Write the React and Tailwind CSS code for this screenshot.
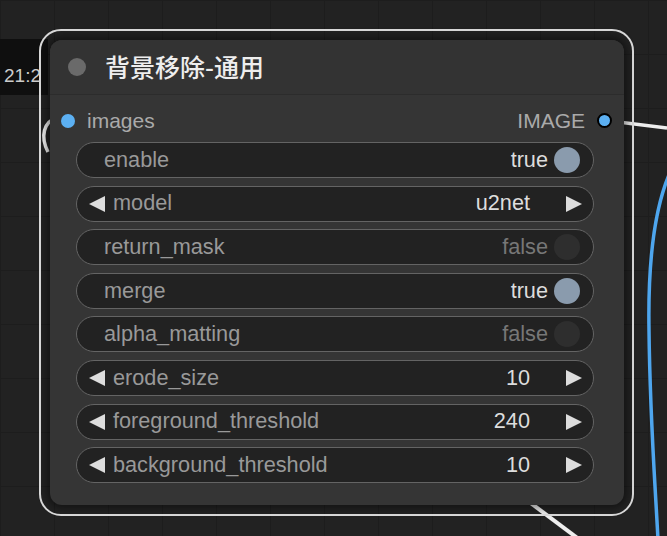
import React from "react";

const FONT = { fontFamily: '"Liberation Sans", Arial, sans-serif' };

const widgets = [
  { type: "toggle", label: "enable", value: "true", on: true },
  { type: "combo", label: "model", value: "u2net" },
  { type: "toggle", label: "return_mask", value: "false", on: false },
  { type: "toggle", label: "merge", value: "true", on: true },
  { type: "toggle", label: "alpha_matting", value: "false", on: false },
  { type: "combo", label: "erode_size", value: "10" },
  { type: "combo", label: "foreground_threshold", value: "240" },
  { type: "combo", label: "background_threshold", value: "10" },
];

const ArrowLeft = () => (
  <svg width="18" height="18" viewBox="0 0 18 18" className="shrink-0">
    <polygon points="17,1 17,17 1,9" fill="#dddddd" />
  </svg>
);

const ArrowRight = () => (
  <svg width="18" height="18" viewBox="0 0 18 18" className="shrink-0">
    <polygon points="1,1 1,17 17,9" fill="#dddddd" />
  </svg>
);

const Widget = ({ w }) => {
  if (w.type === "toggle") {
    return (
      <div className="h-[36px] rounded-full border-[1.5px] border-[#646464] bg-[#222222] flex items-center pl-[27px] pr-[13px]">
        <span className="text-[#999999]">{w.label}</span>
        <span className={"ml-auto " + (w.on ? "text-[#dddddd]" : "text-[#777777]")}>
          {w.value}
        </span>
        <span
          className={
            "ml-[6px] w-[26px] h-[26px] rounded-full " +
            (w.on ? "bg-[#8a9bad]" : "bg-[#2e2e2e]")
          }
        />
      </div>
    );
  }
  return (
    <div className="h-[36px] rounded-full border-[1.5px] border-[#646464] bg-[#222222] flex items-center pl-[11px] pr-[10px]">
      <ArrowLeft />
      <span className="ml-[7px] text-[#999999]">{w.label}</span>
      <span className="ml-auto text-[#dddddd]">{w.value}</span>
      <span className="ml-[35px]">
        <ArrowRight />
      </span>
    </div>
  );
};

export default function App() {
  return (
    <div
      className="relative w-[667px] h-[536px] overflow-hidden bg-[#222222] bg-[linear-gradient(#1d1d1d_1px,transparent_1px),linear-gradient(90deg,#1d1d1d_1px,transparent_1px)] bg-[size:54px_54px]"
      style={FONT}
    >
      {/* wires behind the node */}
      <svg className="absolute inset-0" width="667" height="536">
        <path d="M56 118 C 44 122, 40 136, 48 152" stroke="#eeeeee" strokeWidth="3.5" fill="none" />
        <path d="M610 121 L 667 128" stroke="#eeeeee" strokeWidth="3.5" fill="none" />
        <path d="M500 480 L 580 540" stroke="#eeeeee" strokeWidth="4" fill="none" />
        <path d="M672 168 C 652 210, 648 270, 649 330 C 650 420, 655 480, 658 540" stroke="#4ea6ee" strokeWidth="3.5" fill="none" />
      </svg>

      {/* time stamp of the node behind */}
      <div className="absolute left-0 top-[39px] w-[48px] h-[56px] bg-[#0f0f0f] pl-[4px] pt-[26px] text-[19px] leading-[22px] text-[#cccccc]">
        21:2
      </div>

      <div className="relative ml-[39px] mt-[29px] w-[595px] border-2 border-[#dcdcdc] rounded-[22px] p-[9px] pr-[8px]">
        <div className="w-[574px] h-[465px] rounded-[12px] bg-[#353535] shadow-[0_0_8px_3px_rgba(0,0,0,0.45)] overflow-hidden">
          {/* title */}
          <div className="h-[55px] bg-[#333333] border-b border-[#2c2c2c] flex items-center pl-[18px]">
            <span className="w-[18px] h-[18px] rounded-full bg-[#6a6a6a]" />
            <span
              className="ml-[19px] text-[25px] font-medium text-[#eeeeee]"
              style={{ fontFamily: '"Noto Sans CJK SC", "Liberation Sans", sans-serif' }}
            >
              背景移除-通用
            </span>
          </div>

          {/* slots */}
          <div className="h-[51px] flex items-center pl-[11px] pr-[12px] text-[21px] text-[#aaaaaa]">
            <span className="w-[14px] h-[14px] rounded-full bg-[#5cb0f2]" />
            <span className="ml-[12px]">images</span>
            <span className="ml-auto">IMAGE</span>
            <span className="ml-[12px] w-[15px] h-[15px] rounded-full bg-[#5cb0f2] border-2 border-black" />
          </div>

          {/* widgets */}
          <div className="ml-[26px] w-[518px] mt-[-4px] flex flex-col gap-[7.6px] text-[21.7px]">
            {widgets.map((w) => (
              <Widget key={w.label} w={w} />
            ))}
          </div>
        </div>
      </div>
    </div>
  );
}
